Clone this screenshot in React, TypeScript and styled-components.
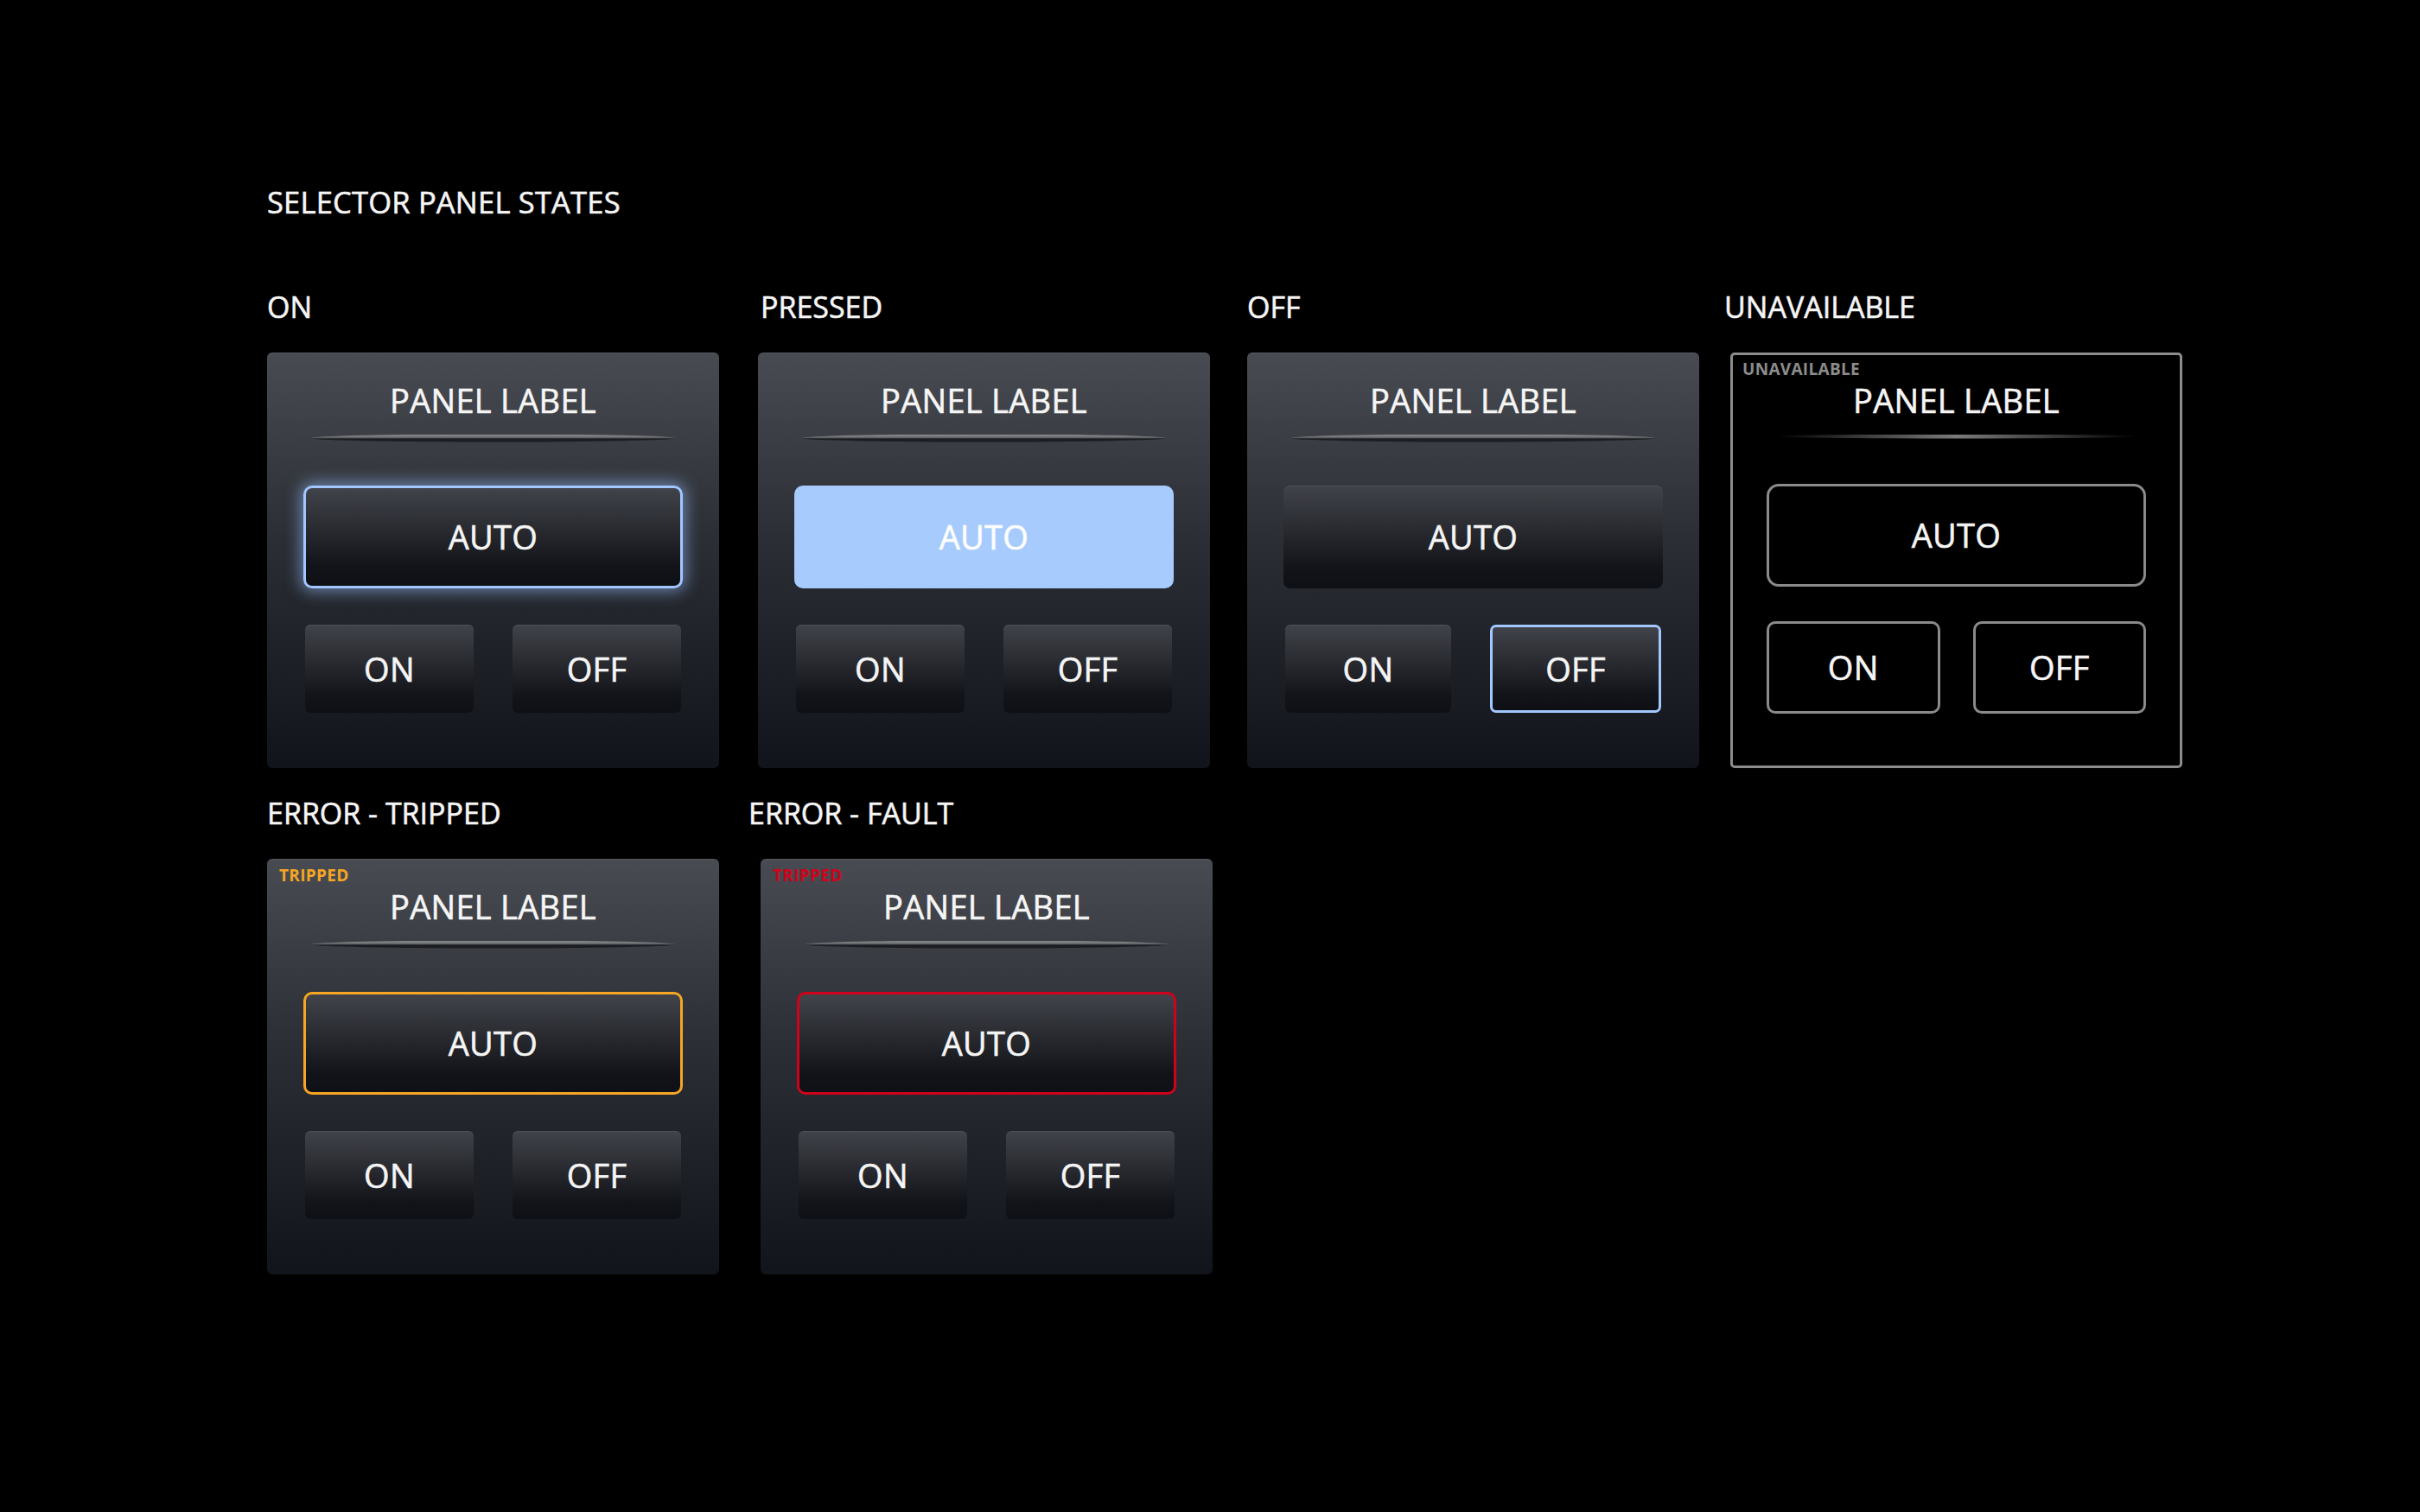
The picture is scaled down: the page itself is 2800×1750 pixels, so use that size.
import React from 'react';
import styled, { createGlobalStyle, css } from 'styled-components';

type Variant = 'on' | 'pressed' | 'off' | 'unavailable' | 'tripped' | 'fault';

const GlobalStyle = createGlobalStyle`
  html, body {
    margin: 0;
    padding: 0;
    background: #000;
  }
  body {
    font-family: "Open Sans", "Noto Sans", sans-serif;
    color: #f5f5f5;
  }
`;

// slightly heavier strokes, the reference text renders a bit bolder than regular
const heavy = css`
  -webkit-text-stroke: 0.6px currentColor;
`;

const Page = styled.div`
  width: 2800px;
  height: 1750px;
  box-sizing: border-box;
  padding: 217px 0 0 309px;
  background: #000;
`;

const Title = styled.h1`
  margin: 0 0 86px;
  font-size: 34.5px;
  line-height: 1;
  font-weight: 400;
  letter-spacing: 0.2px;
  ${heavy}
`;

const Row = styled.div`
  display: flex;
  align-items: flex-start;
  margin-bottom: 35px;
`;

const Cell = styled.section<{ $gap: number }>`
  display: flex;
  flex-direction: column;
  margin-left: ${(p) => p.$gap}px;
`;

const SectionLabel = styled.h2<{ $shift: number }>`
  margin: 0 0 36px ${(p) => p.$shift}px;
  font-size: 34px;
  line-height: 1;
  font-weight: 400;
  white-space: nowrap;
  ${heavy}
`;

const Panel = styled.div<{ $variant: Variant }>`
  position: relative;
  width: 523px;
  height: 481px;
  box-sizing: border-box;
  padding: 36px 42px 0;
  display: flex;
  flex-direction: column;
  border-radius: 6px;
  ${(p) =>
    p.$variant === 'unavailable'
      ? css`
          background: #000;
          border: 3px solid #8c8c8c;
          border-radius: 5px;
          padding: 33px 39px 0;
        `
      : css`
          background: linear-gradient(180deg, #484b51 0%, #2b2e34 45%, #12141b 100%);
          box-shadow: inset 0 1px 0 rgba(255, 255, 255, 0.08);
        `}
`;

const tagColors: Record<string, string> = {
  tripped: '#f5a623',
  fault: '#d0021b',
  unavailable: '#8c8c8c',
};

const Tag = styled.span<{ $variant: Variant }>`
  position: absolute;
  top: 10px;
  left: 14px;
  font-size: 19px;
  line-height: 1;
  font-weight: 700;
  letter-spacing: 0.3px;
  color: ${(p) => tagColors[p.$variant] || '#fff'};
  ${(p) =>
    p.$variant === 'unavailable' &&
    css`
      top: 7px;
      left: 11px;
    `}
`;

const PanelLabel = styled.div`
  font-size: 38px;
  line-height: 1;
  font-weight: 400;
  text-align: center;
  letter-spacing: 0.3px;
  ${heavy}
`;

const Divider = styled.div<{ $flat: boolean }>`
  align-self: center;
  width: 420px;
  height: 9px;
  margin-top: 21px;
  clip-path: ellipse(50% 50% at 50% 50%);
  ${(p) =>
    p.$flat
      ? css`
          height: 5px;
          margin-bottom: 4px;
          background: linear-gradient(90deg, rgba(90, 90, 90, 0) 0%, #7a7a7a 50%, rgba(90, 90, 90, 0) 100%);
        `
      : css`
          background: linear-gradient(180deg, #8a8b8f 0%, #6e6f73 35%, #1a1c21 55%, #1c1e23 100%);
        `}
`;

const buttonBase = css`
  box-sizing: border-box;
  display: flex;
  align-items: center;
  justify-content: center;
  font-family: "Open Sans", "Noto Sans", sans-serif;
  font-size: 38px;
  line-height: 1;
  font-weight: 400;
  color: #f5f5f5;
  letter-spacing: 0.3px;
  ${heavy}
`;

const gradientFill = css`
  background: linear-gradient(180deg, #404349 0%, #2a2c32 40%, #121419 80%, #0e1016 100%);
`;

const AutoButton = styled.div<{ $variant: Variant }>`
  ${buttonBase}
  height: 119px;
  margin-top: 50px;
  border-radius: 10px;
  ${gradientFill}
  ${(p) => {
    switch (p.$variant) {
      case 'on':
        return css`
          border: 3px solid #a2c7ff;
          box-shadow: 0 0 18px 3px rgba(150, 190, 255, 0.6);
        `;
      case 'pressed':
        return css`
          background: #a7cbfd;
          color: #ffffff;
        `;
      case 'tripped':
        return css`
          border: 3px solid #f5a623;
        `;
      case 'fault':
        return css`
          border: 3px solid #d0021b;
        `;
      case 'unavailable':
        return css`
          background: #000;
          border: 3px solid #8a8a8a;
          border-radius: 14px;
          margin-top: 48px;
        `;
      default:
        return css`
          border-radius: 8px;
          box-shadow: inset 0 1px 0 rgba(255, 255, 255, 0.08);
        `;
    }
  }}
`;

const SwitchRow = styled.div<{ $variant: Variant }>`
  display: flex;
  gap: 45px;
  margin-top: ${(p) => (p.$variant === 'unavailable' ? '40px' : '42px')};
  padding: 0 2px;
  ${(p) =>
    p.$variant === 'unavailable' &&
    css`
      gap: 38px;
      padding: 0;
    `}
`;

const SwitchButton = styled.div<{ $selected: boolean; $dim: boolean }>`
  ${buttonBase}
  flex: 1;
  height: 102px;
  border-radius: 6px;
  ${gradientFill}
  box-shadow: inset 0 1px 0 rgba(255, 255, 255, 0.07);
  ${(p) =>
    p.$selected &&
    css`
      border: 3px solid #a2c7ff;
      border-radius: 7px;
      box-shadow: none;
    `}
  ${(p) =>
    p.$dim &&
    css`
      height: 107px;
      background: #000;
      border: 3px solid #8a8a8a;
      border-radius: 10px;
      box-shadow: none;
    `}
`;

interface PanelDef {
  title: string;
  variant: Variant;
  gap: number;
  shift: number;
  tag?: string;
}

const rows: PanelDef[][] = [
  [
    { title: 'ON', variant: 'on', gap: 0, shift: 0 },
    { title: 'PRESSED', variant: 'pressed', gap: 45, shift: 3 },
    { title: 'OFF', variant: 'off', gap: 43, shift: 0 },
    { title: 'UNAVAILABLE', variant: 'unavailable', gap: 36, shift: -7, tag: 'UNAVAILABLE' },
  ],
  [
    { title: 'ERROR - TRIPPED', variant: 'tripped', gap: 0, shift: 0, tag: 'TRIPPED' },
    { title: 'ERROR - FAULT', variant: 'fault', gap: 48, shift: -14, tag: 'TRIPPED' },
  ],
];

const SelectorPanel = ({ def }: { def: PanelDef }) => {
  const dim = def.variant === 'unavailable';
  return (
    <Cell $gap={def.gap}>
      <SectionLabel $shift={def.shift}>{def.title}</SectionLabel>
      <Panel $variant={def.variant}>
        {def.tag && <Tag $variant={def.variant}>{def.tag}</Tag>}
        <PanelLabel>PANEL LABEL</PanelLabel>
        <Divider $flat={dim} />
        <AutoButton $variant={def.variant}>AUTO</AutoButton>
        <SwitchRow $variant={def.variant}>
          <SwitchButton $selected={false} $dim={dim}>
            ON
          </SwitchButton>
          <SwitchButton $selected={def.variant === 'off'} $dim={dim}>
            OFF
          </SwitchButton>
        </SwitchRow>
      </Panel>
    </Cell>
  );
};

const App = () => {
  return (
    <>
      <GlobalStyle />
      <Page>
        <Title>SELECTOR PANEL STATES</Title>
        {rows.map((row, i) => (
          <Row key={i}>
            {row.map((def) => (
              <SelectorPanel key={def.title} def={def} />
            ))}
          </Row>
        ))}
      </Page>
    </>
  );
};

export default App;
